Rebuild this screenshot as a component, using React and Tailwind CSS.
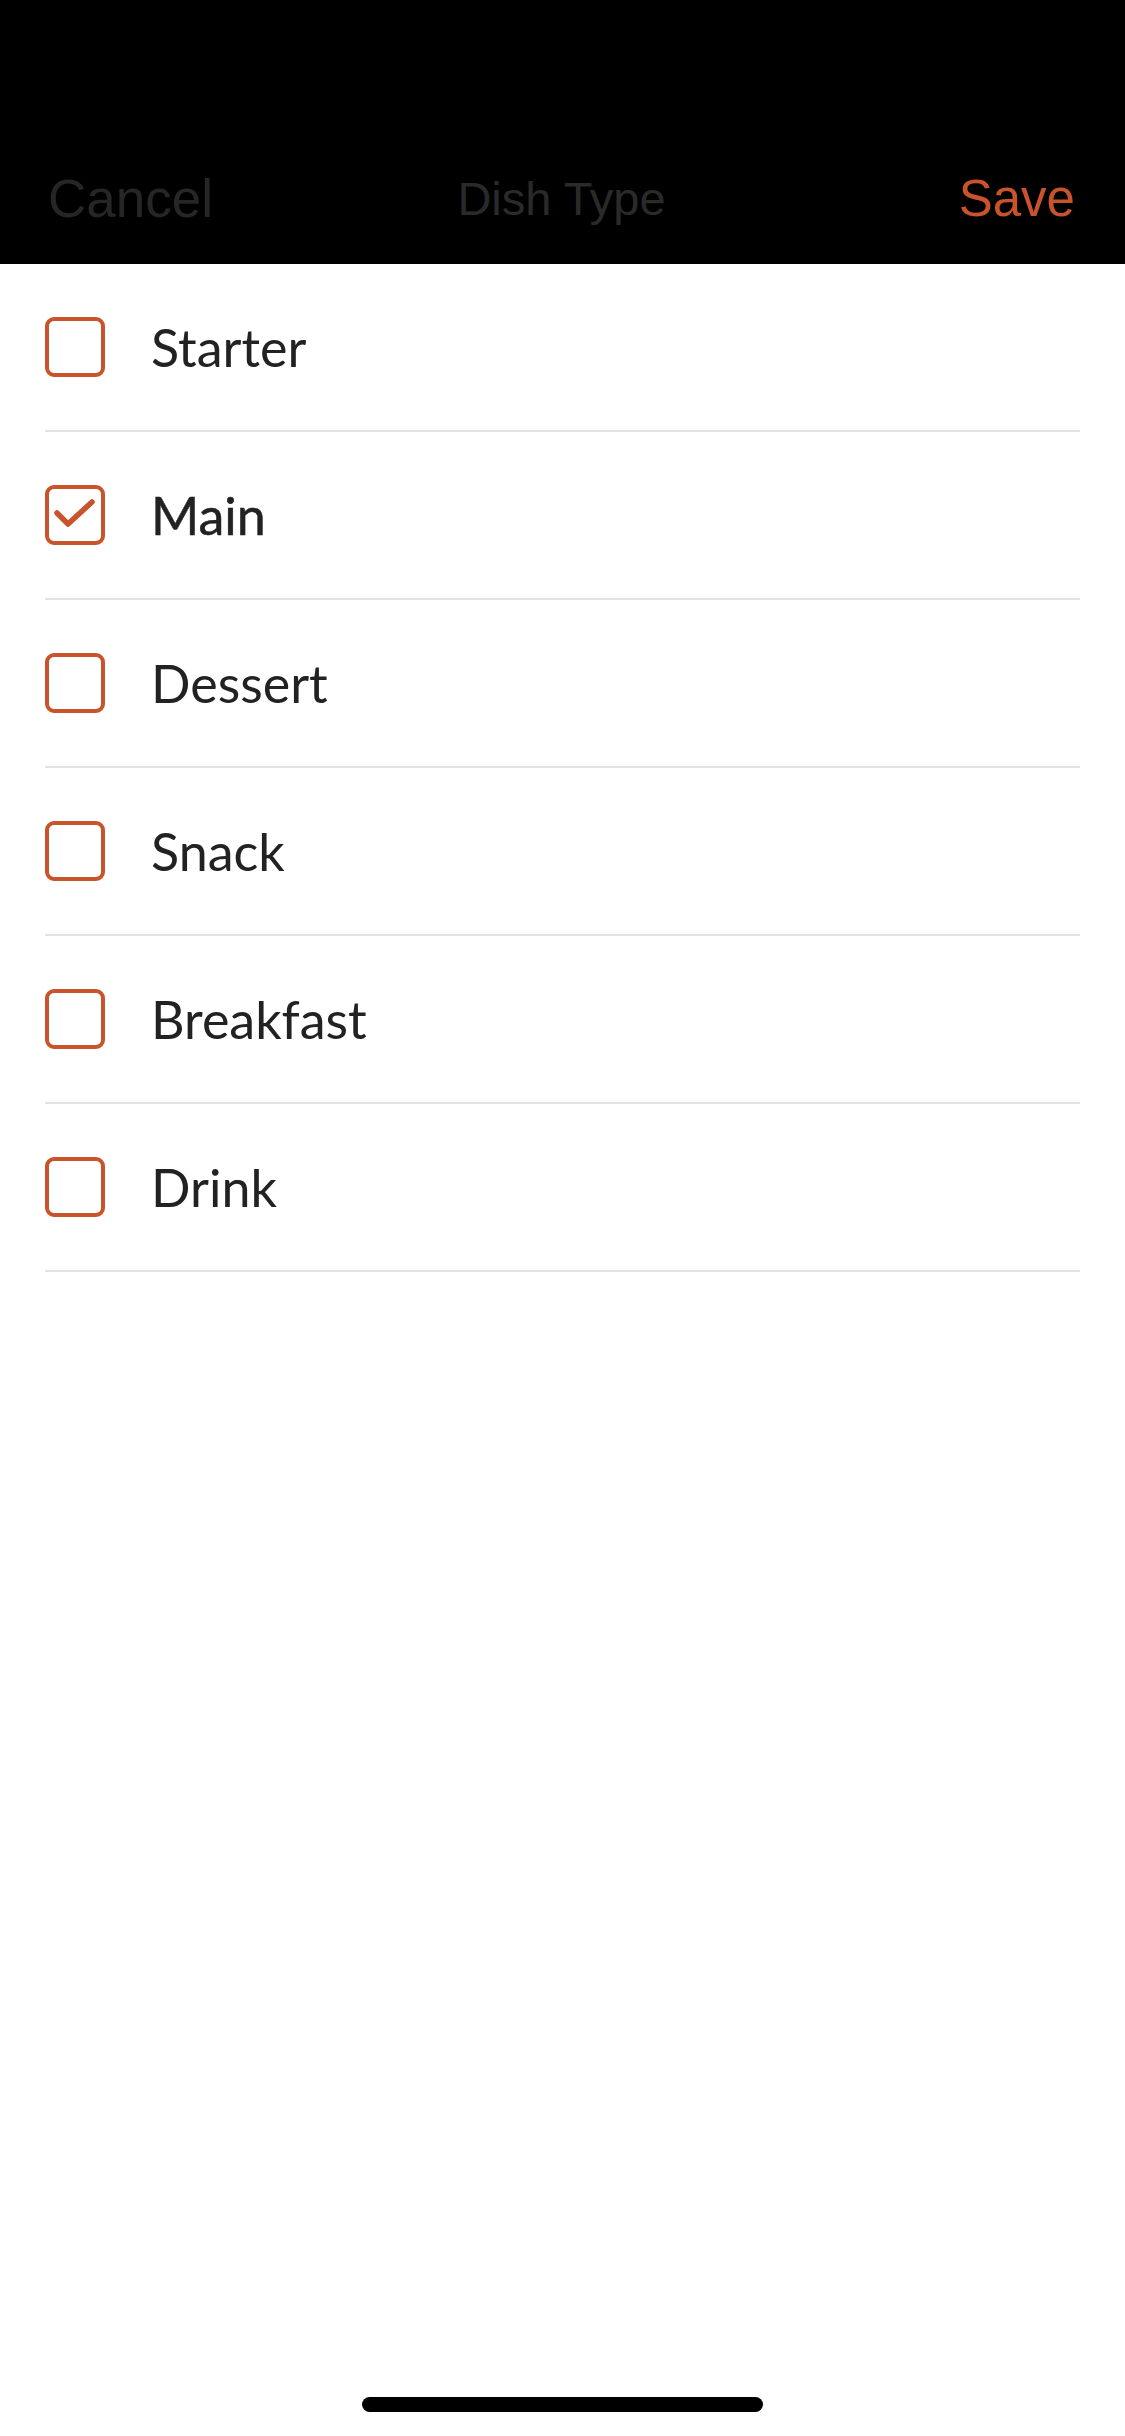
import React, { useState } from "react";

const ORANGE = "#c9532b";

const CheckIcon = () => (
    <svg width="60" height="60" viewBox="0 0 60 60" className="absolute inset-0">
        <path d="M12 28 L23 39 L47 17" fill="none" stroke={ORANGE} strokeWidth="5.5" strokeLinecap="round" strokeLinejoin="round" />
    </svg>
);

const App = function () {
    const [selected, setSelected] = useState(["Main"]);
    const types = ["Starter", "Main", "Dessert", "Snack", "Breakfast", "Drink"];

    const toggle = (name) => {
        if (selected.includes(name)) {
            setSelected(selected.filter((s) => s !== name));
        } else {
            setSelected([...selected, name]);
        }
    };

    return (
        <div className="w-[1125px] h-[2436px] bg-white flex flex-col" style={{ fontFamily: "Lato, 'Liberation Sans', sans-serif" }}>
            {/* header */}
            <div className="h-[264px] bg-black flex items-end justify-between pl-[48px] pr-[50px] pb-[35px] font-['Liberation_Sans',sans-serif]">
                <span className="text-[53px] leading-[60px] text-[#262626] w-[220px]">Cancel</span>
                <span className="text-[47px] leading-[60px] text-[#2a2a2a] font-medium">Dish Type</span>
                <span className="text-[51px] leading-[60px] w-[220px] text-right" style={{ color: ORANGE }}>Save</span>
            </div>

            {/* list */}
            <div className="flex-1 pl-[45px] pr-[45px]">
                {types.map((name) => {
                    const checked = selected.includes(name);
                    return (
                        <div key={name}
                            className="h-[168px] border-b-2 border-[#e1e1e1] flex items-center cursor-pointer"
                            onClick={() => toggle(name)}>
                            <div className="relative w-[60px] h-[60px] rounded-[9px] border-[4px] shrink-0" style={{ borderColor: ORANGE }}>
                                {checked && <div className="absolute -inset-[4px]"><CheckIcon /></div>}
                            </div>
                            <span className={"ml-[46px] text-[52px] text-[#222222] " + (checked ? "[-webkit-text-stroke:0.5px_#222222]" : "")}>{name}</span>
                        </div>
                    );
                })}
            </div>

            {/* home indicator */}
            <div className="flex justify-center pb-[24px]">
                <div className="w-[401px] h-[15px] rounded-full bg-black"></div>
            </div>
        </div>
    );
};

export default App;
